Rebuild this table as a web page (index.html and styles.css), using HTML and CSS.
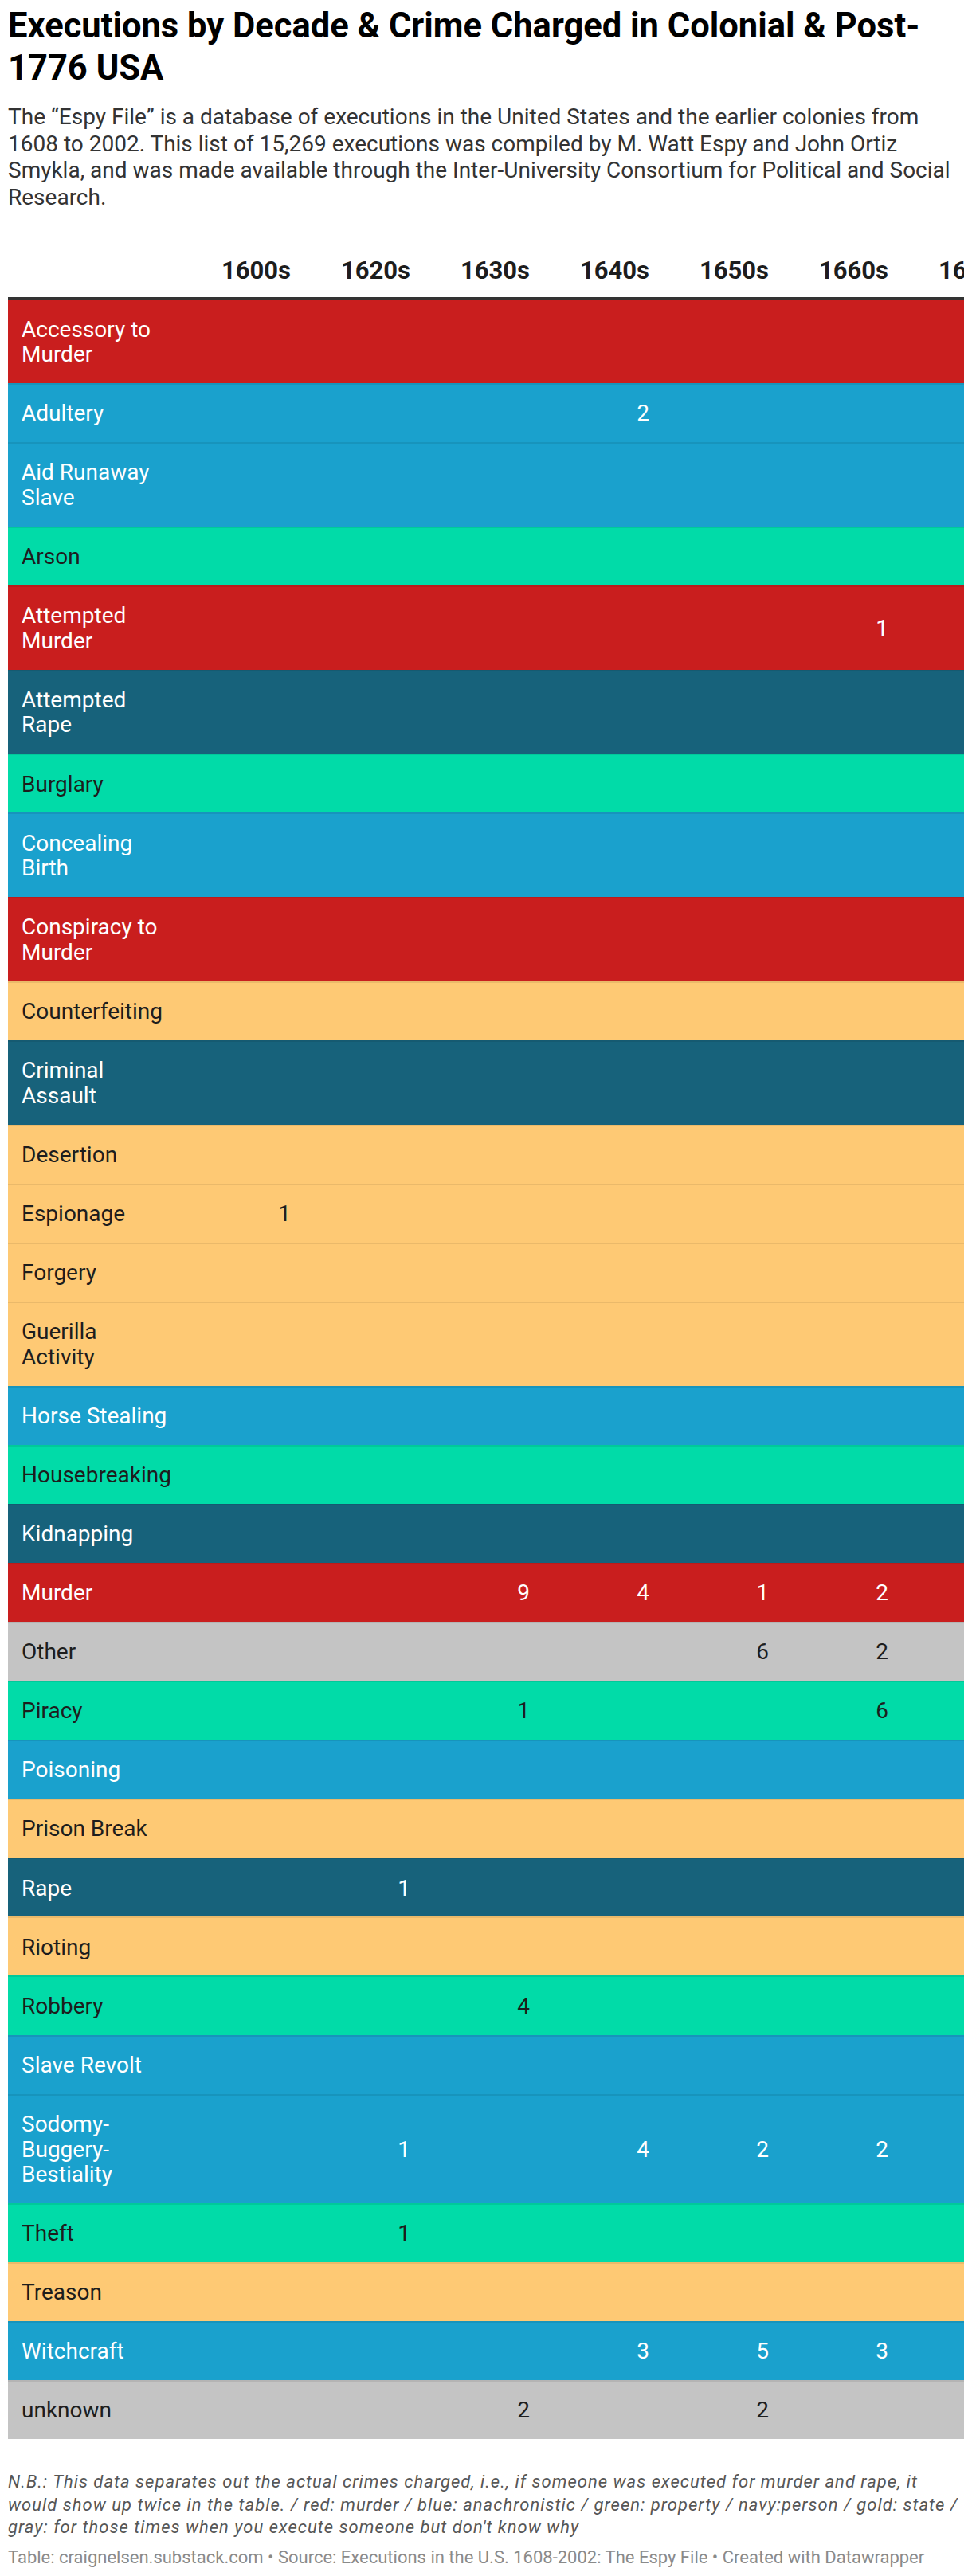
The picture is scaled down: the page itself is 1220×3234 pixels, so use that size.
FILE: index.html
```html
<!DOCTYPE html>
<html lang="en">
<head>
<meta charset="utf-8">
<title>Executions by Decade &amp; Crime Charged</title>
<link rel="stylesheet" href="styles.css">
</head>
<body>
<div class="chart">
  <h1 class="title">Executions by Decade &amp; Crime Charged in Colonial &amp; Post-<wbr>1776 USA</h1>
  <p class="desc">The “Espy File” is a database of executions in the United States and the earlier colonies from 1608 to 2002. This list of 15,269 executions was compiled by M. Watt Espy and John Ortiz Smykla, and was made available through the Inter-University Consortium for Political and Social Research.</p>
  <div class="tbl-wrap">
    <table class="tbl">
      <colgroup>
        <col class="c-label"><col class="c-num"><col class="c-num"><col class="c-num"><col class="c-num"><col class="c-num"><col class="c-num"><col class="c-num">
      </colgroup>
      <thead>
        <tr><th></th><th>1600s</th><th>1620s</th><th>1630s</th><th>1640s</th><th>1650s</th><th>1660s</th><th>1670s</th></tr>
      </thead>
      <tbody>
        <tr class="red"><td>Accessory to Murder</td><td></td><td></td><td></td><td></td><td></td><td></td><td></td></tr>
        <tr class="blue"><td>Adultery</td><td></td><td></td><td></td><td>2</td><td></td><td></td><td></td></tr>
        <tr class="blue"><td>Aid Runaway Slave</td><td></td><td></td><td></td><td></td><td></td><td></td><td></td></tr>
        <tr class="green"><td>Arson</td><td></td><td></td><td></td><td></td><td></td><td></td><td></td></tr>
        <tr class="red"><td>Attempted Murder</td><td></td><td></td><td></td><td></td><td></td><td>1</td><td></td></tr>
        <tr class="navy"><td>Attempted Rape</td><td></td><td></td><td></td><td></td><td></td><td></td><td></td></tr>
        <tr class="green"><td>Burglary</td><td></td><td></td><td></td><td></td><td></td><td></td><td></td></tr>
        <tr class="blue"><td>Concealing Birth</td><td></td><td></td><td></td><td></td><td></td><td></td><td></td></tr>
        <tr class="red"><td>Conspiracy to Murder</td><td></td><td></td><td></td><td></td><td></td><td></td><td></td></tr>
        <tr class="gold"><td>Counterfeiting</td><td></td><td></td><td></td><td></td><td></td><td></td><td></td></tr>
        <tr class="navy"><td>Criminal Assault</td><td></td><td></td><td></td><td></td><td></td><td></td><td></td></tr>
        <tr class="gold"><td>Desertion</td><td></td><td></td><td></td><td></td><td></td><td></td><td></td></tr>
        <tr class="gold"><td>Espionage</td><td>1</td><td></td><td></td><td></td><td></td><td></td><td></td></tr>
        <tr class="gold"><td>Forgery</td><td></td><td></td><td></td><td></td><td></td><td></td><td></td></tr>
        <tr class="gold"><td>Guerilla Activity</td><td></td><td></td><td></td><td></td><td></td><td></td><td></td></tr>
        <tr class="blue"><td>Horse Stealing</td><td></td><td></td><td></td><td></td><td></td><td></td><td></td></tr>
        <tr class="green"><td>Housebreaking</td><td></td><td></td><td></td><td></td><td></td><td></td><td></td></tr>
        <tr class="navy"><td>Kidnapping</td><td></td><td></td><td></td><td></td><td></td><td></td><td></td></tr>
        <tr class="red"><td>Murder</td><td></td><td></td><td>9</td><td>4</td><td>1</td><td>2</td><td></td></tr>
        <tr class="gray"><td>Other</td><td></td><td></td><td></td><td></td><td>6</td><td>2</td><td></td></tr>
        <tr class="green"><td>Piracy</td><td></td><td></td><td>1</td><td></td><td></td><td>6</td><td></td></tr>
        <tr class="blue"><td>Poisoning</td><td></td><td></td><td></td><td></td><td></td><td></td><td></td></tr>
        <tr class="gold"><td>Prison Break</td><td></td><td></td><td></td><td></td><td></td><td></td><td></td></tr>
        <tr class="navy"><td>Rape</td><td></td><td>1</td><td></td><td></td><td></td><td></td><td></td></tr>
        <tr class="gold"><td>Rioting</td><td></td><td></td><td></td><td></td><td></td><td></td><td></td></tr>
        <tr class="green"><td>Robbery</td><td></td><td></td><td>4</td><td></td><td></td><td></td><td></td></tr>
        <tr class="blue"><td>Slave Revolt</td><td></td><td></td><td></td><td></td><td></td><td></td><td></td></tr>
        <tr class="blue"><td>Sodomy-Buggery-Bestiality</td><td></td><td>1</td><td></td><td>4</td><td>2</td><td>2</td><td></td></tr>
        <tr class="green"><td>Theft</td><td></td><td>1</td><td></td><td></td><td></td><td></td><td></td></tr>
        <tr class="gold"><td>Treason</td><td></td><td></td><td></td><td></td><td></td><td></td><td></td></tr>
        <tr class="blue"><td>Witchcraft</td><td></td><td></td><td></td><td>3</td><td>5</td><td>3</td><td></td></tr>
        <tr class="gray"><td>unknown</td><td></td><td></td><td>2</td><td></td><td>2</td><td></td><td></td></tr>
      </tbody>
    </table>
  </div>
  <p class="notes">N.B.: This data separates out the actual crimes charged, i.e., if someone was executed for murder and rape, it would show up twice in the table. / red: murder / blue: anachronistic / green: property / navy:person / gold: state / gray: for those times when you execute someone but don't know why</p>
  <p class="footer">Table: craignelsen.substack.com • Source: Executions in the U.S. 1608-2002: The Espy File • Created with Datawrapper</p>
</div>
</body>
</html>
```

FILE: styles.css
```css
html, body {
  margin: 0;
  padding: 0;
  background: #fff;
}

.chart {
  padding: 6px 10px 8px;
  font-family: Roboto, "Liberation Sans", sans-serif;
  color: #1d1d1d;
}

.title {
  margin: 0;
  font-size: 43.5px;
  line-height: 53px;
  font-weight: 700;
  color: #000;
}

.desc {
  margin: 18px 0 0;
  font-size: 28px;
  line-height: 33.6px;
  color: #333;
}

.tbl-wrap {
  margin-top: 57px;
  overflow: hidden;
  width: 1200px;
}

.tbl {
  table-layout: fixed;
  width: 1265px;
  border-collapse: separate;
  border-spacing: 0;
}

.c-label { width: 215px; }
.c-num { width: 150px; }

.tbl th {
  font-size: 31px;
  line-height: 37px;
  font-weight: 700;
  text-align: right;
  padding: 0 10px 15px 0;
  border-bottom: 4px solid #333;
  color: #1d1d1d;
  white-space: nowrap;
}

.tbl td {
  font-size: 28px;
  line-height: 31.6px;
  padding: 20.25px 10px 20.25px 0;
  text-align: right;
  vertical-align: middle;
  border-top: 2px solid rgba(0, 0, 0, 0.08);
}

.tbl tbody tr:first-child td {
  border-top: 0;
}

.tbl td:first-child {
  text-align: left;
  padding-left: 17px;
}

.red { background: #c91e1e; color: #fff; }
.blue { background: #1aa1cd; color: #fff; }
.navy { background: #17627b; color: #fff; }
.green { background: #01dba8; color: #1d1d1d; }
.gold { background: #fec974; color: #1d1d1d; }
.gray { background: #c4c4c4; color: #1d1d1d; }

.notes {
  margin: 40px 0 0;
  font-size: 22px;
  line-height: 28.5px;
  font-style: italic;
  letter-spacing: 1.02px;
  color: #575757;
}

.footer {
  margin: 10px 0 0;
  font-size: 22px;
  line-height: 25px;
  color: #8a8a8a;
}
```
